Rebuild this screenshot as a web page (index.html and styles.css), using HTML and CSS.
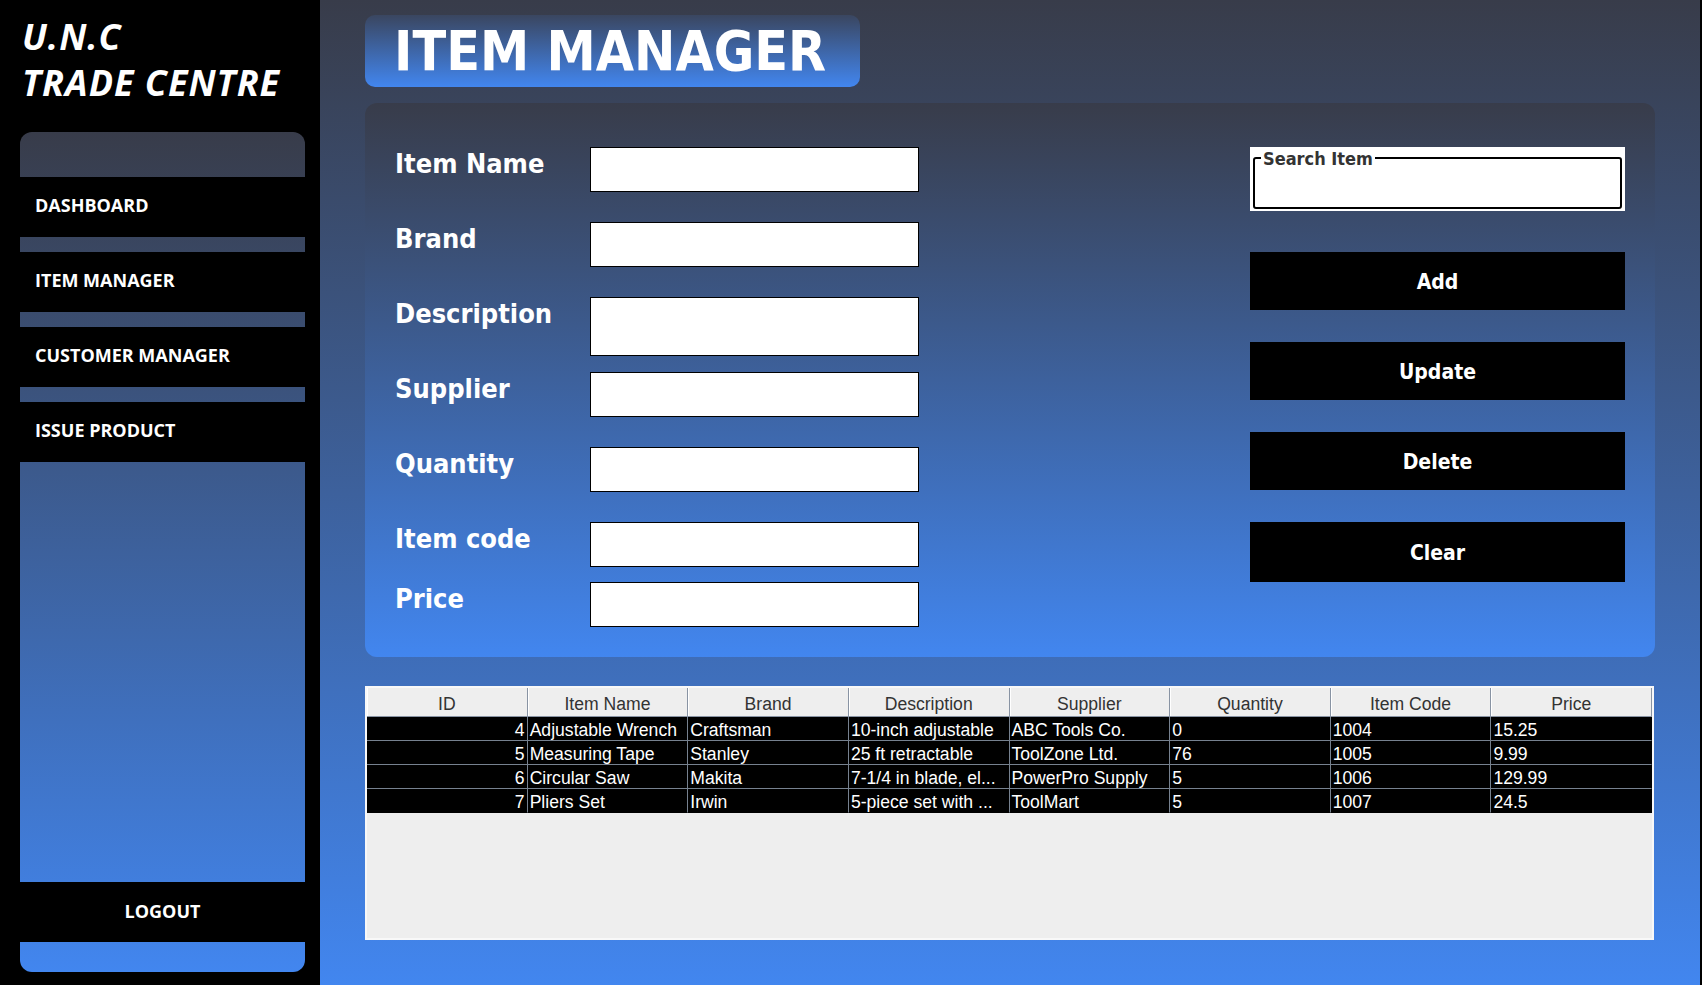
FILE: index.html
```html
<!DOCTYPE html>
<html>
<head>
<meta charset="utf-8">
<title>Item Manager</title>
<link rel="stylesheet" href="styles.css">
</head>
<body>
<div class="app">
  <aside class="sidebar">
    <div class="logo">
      <div>U.N.C</div>
      <div>TRADE CENTRE</div>
    </div>
    <nav class="nav-panel">
      <div class="nav-cap"></div>
      <div class="nav-btn">DASHBOARD</div>
      <div class="nav-gap"></div>
      <div class="nav-btn">ITEM MANAGER</div>
      <div class="nav-gap"></div>
      <div class="nav-btn">CUSTOMER MANAGER</div>
      <div class="nav-gap"></div>
      <div class="nav-btn">ISSUE PRODUCT</div>
      <div class="nav-fill"></div>
      <div class="nav-btn logout">LOGOUT</div>
      <div class="nav-foot"></div>
    </nav>
  </aside>

  <main class="main">
    <div class="title-box"><h1 class="title">ITEM MANAGER</h1></div>

    <section class="panel">
      <div class="form">
        <div class="field"><label class="label">Item Name</label><input class="input" type="text"></div>
        <div class="field"><label class="label">Brand</label><input class="input" type="text"></div>
        <div class="field field-desc"><label class="label">Description</label><input class="input input-tall" type="text"></div>
        <div class="field"><label class="label">Supplier</label><input class="input" type="text"></div>
        <div class="field"><label class="label">Quantity</label><input class="input" type="text"></div>
        <div class="field field-code"><label class="label">Item code</label><input class="input" type="text"></div>
        <div class="field field-last"><label class="label">Price</label><input class="input" type="text"></div>
      </div>

      <div class="actions">
        <div class="search">
          <fieldset class="search-set"><legend class="search-legend">Search Item</legend></fieldset>
        </div>
        <button class="btn btn-first">Add</button>
        <button class="btn">Update</button>
        <button class="btn">Delete</button>
        <button class="btn btn-clear">Clear</button>
      </div>
    </section>

    <div class="table-wrap">
      <table class="grid">
        <thead>
          <tr>
            <th>ID</th><th>Item Name</th><th>Brand</th><th>Description</th>
            <th>Supplier</th><th>Quantity</th><th>Item Code</th><th>Price</th>
          </tr>
        </thead>
        <tbody>
          <tr>
            <td class="num">4</td><td>Adjustable Wrench</td><td>Craftsman</td><td>10-inch adjustable</td>
            <td>ABC Tools Co.</td><td>0</td><td>1004</td><td>15.25</td>
          </tr>
          <tr>
            <td class="num">5</td><td>Measuring Tape</td><td>Stanley</td><td>25 ft retractable</td>
            <td>ToolZone Ltd.</td><td>76</td><td>1005</td><td>9.99</td>
          </tr>
          <tr>
            <td class="num">6</td><td>Circular Saw</td><td>Makita</td><td>7-1/4 in blade, el...</td>
            <td>PowerPro Supply</td><td>5</td><td>1006</td><td>129.99</td>
          </tr>
          <tr>
            <td class="num">7</td><td>Pliers Set</td><td>Irwin</td><td>5-piece set with ...</td>
            <td>ToolMart</td><td>5</td><td>1007</td><td>24.5</td>
          </tr>
        </tbody>
      </table>
    </div>
  </main>
</div>
</body>
</html>
```

FILE: styles.css
```css
* { box-sizing: border-box; }

html, body { margin: 0; padding: 0; }

body {
  width: 1702px;
  height: 985px;
  background: #000;
  overflow: hidden;
}

.app {
  display: flex;
  height: 985px;
}

/* ---------- Sidebar ---------- */
.sidebar {
  width: 320px;
  flex: none;
  background: #000;
  padding: 0 15px 0 20px;
  display: flex;
  flex-direction: column;
}

.logo {
  height: 132px;
  padding: 14px 0 0 2px;
  font-family: "Open Sans", "Noto Sans", sans-serif;
  font-weight: 700;
  font-style: italic;
  font-size: 36px;
  line-height: 46px;
  letter-spacing: 1px;
  color: #fff;
  white-space: nowrap;
}

.nav-panel {
  width: 285px;
  height: 840px;
  border-radius: 12px;
  background: linear-gradient(#383c4a, #4286ef);
  display: flex;
  flex-direction: column;
  overflow: hidden;
}

.nav-cap { height: 45px; }
.nav-gap { height: 15px; }
.nav-fill { flex: 1; }
.nav-foot { height: 30px; }

.nav-btn {
  height: 60px;
  flex: none;
  background: #000;
  color: #fff;
  font-family: "Open Sans", "Noto Sans", sans-serif;
  font-weight: 700;
  font-size: 18px;
  display: flex;
  align-items: center;
  padding: 0 0 4px 15px;
}

.logout {
  justify-content: center;
  padding: 0 0 3px 0;
}

/* ---------- Main ---------- */
.main {
  width: 1380px;
  height: 985px;
  flex: none;
  background: linear-gradient(#383c4a, #4286ef);
  padding: 15px 0 0 45px;
}

.title-box {
  width: 495px;
  height: 72px;
  border-radius: 10px;
  background: linear-gradient(#3a4660, #4286ef);
  padding-left: 29px;
}

.title {
  margin: 0;
  font-family: "DejaVu Sans Condensed", "DejaVu Sans", sans-serif;
  font-stretch: condensed;
  font-weight: 700;
  font-size: 55px;
  line-height: 72px;
  color: #fff;
  white-space: nowrap;
}

.panel {
  margin-top: 16px;
  width: 1290px;
  height: 554px;
  border-radius: 12px;
  background: linear-gradient(#383c4a, #4286ef);
  padding: 44px 30px 30px 30px;
  display: flex;
  justify-content: space-between;
}

.form {
  display: flex;
  flex-direction: column;
}

.field {
  display: flex;
  align-items: flex-start;
  margin-bottom: 30px;
}
.field-desc { margin-bottom: 16px; }
.field-code { margin-bottom: 15px; }
.field-last { margin-bottom: 0; }

.label {
  width: 195px;
  font-family: "DejaVu Sans Condensed", "DejaVu Sans", sans-serif;
  font-stretch: condensed;
  font-weight: 700;
  font-size: 27px;
  line-height: 34px;
  color: #fff;
  white-space: nowrap;
}

.input {
  width: 329px;
  height: 45px;
  margin: 0;
  border: 1px solid #000;
  border-radius: 0;
  background: #fff;
  padding: 0 4px;
  outline: none;
}
.input-tall { height: 59px; }

.actions {
  width: 375px;
  display: flex;
  flex-direction: column;
}

.search {
  width: 375px;
  height: 64px;
  background: #fff;
  padding: 0 3px 2px;
  display: flex;
}

.search-set {
  flex: 1;
  min-width: 0;
  margin: 0;
  border: 2px solid #000;
  border-radius: 3px;
  padding: 0 0 0 6px;
}

.search-legend {
  padding: 2px 2px 0;
  font-family: "DejaVu Sans Condensed", "DejaVu Sans", sans-serif;
  font-stretch: condensed;
  font-weight: 700;
  font-size: 18px;
  line-height: 20px;
  color: #333;
}

.btn {
  width: 375px;
  height: 58px;
  margin: 32px 0 0;
  border: none;
  background: #000;
  color: #fff;
  font-family: "DejaVu Sans Condensed", "DejaVu Sans", sans-serif;
  font-stretch: condensed;
  font-weight: 700;
  font-size: 21px;
  padding: 2px 0 0;
}
.btn-first { margin-top: 41px; }
.btn-clear { height: 60px; }

/* ---------- Table ---------- */
.table-wrap {
  margin-top: 29px;
  width: 1289px;
  height: 254px;
  border: 2px solid #f8f8f8;
  background: #eeeeee;
  overflow: hidden;
}

.grid {
  width: 100%;
  border-collapse: separate;
  border-spacing: 0;
  table-layout: fixed;
  font-family: "Liberation Sans", Arial, sans-serif;
  font-size: 17.6px;
}

.grid th {
  padding: 5px 0 0;
  font-weight: 400;
  line-height: 23px;
  color: #333;
  background: #eeeeee;
  text-align: center;
  border-bottom: 1px solid #8893a3;
  border-right: 1px solid #8893a3;
  box-shadow: inset 1px 0 #ffffff;
}

.grid td {
  padding: 4px 3px 0 2px;
  line-height: 19px;
  color: #fff;
  background: #000;
  text-align: left;
  white-space: nowrap;
  overflow: hidden;
  border-bottom: 1px solid #76818f;
  border-right: 1px solid #76818f;
}

.grid td.num {
  text-align: right;
  padding-right: 2px;
}

.grid td:last-child { border-right-color: #000; }
.grid tbody tr:last-child td { border-bottom-color: #000; }
```
